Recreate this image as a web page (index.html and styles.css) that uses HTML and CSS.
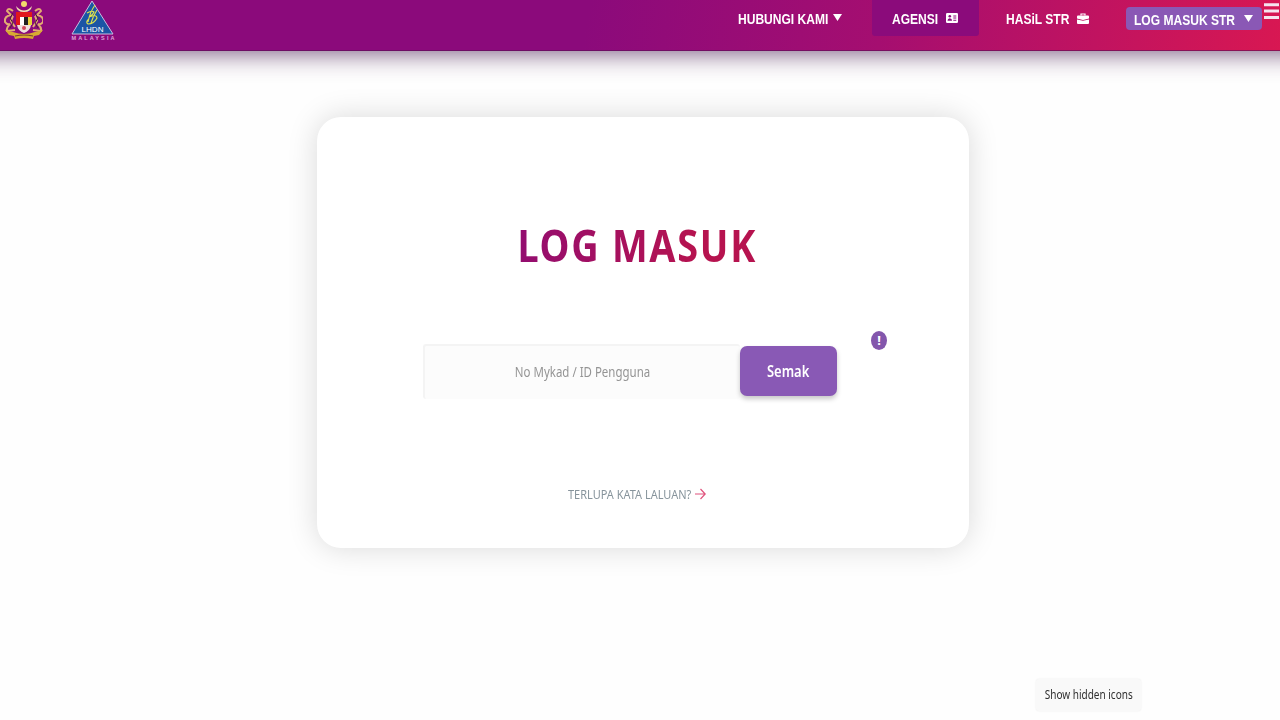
FILE: index.html
```
<!DOCTYPE html>
<html lang="ms">
<head>
<meta charset="utf-8">
<meta name="viewport" content="width=device-width, initial-scale=1.0">
<title>Log Masuk</title>
<link rel="stylesheet" href="styles.css">
</head>
<body>
<header class="header">
	<div class="logos">
		<svg class="jata" viewBox="0 0 44 40" width="44" height="40">
			<circle cx="25" cy="4" r="3" fill="#f2dc6c"/>
			<path d="M17 6q8 9 16 0q-1 6-8 6t-8-6z" fill="#f2e3b4"/>
			<path d="M18 12h14v13q-1 6-7 8q-6-2-7-8z" fill="#eee0dc"/>
			<path d="M17 12h16v5H17z" fill="#e0181c"/>
			<path d="M17 17h4v8h-4z" fill="#e0181c"/>
			<path d="M21 17h4v8h-4z" fill="#fff"/>
			<path d="M25 17h4v8h-4z" fill="#222"/>
			<path d="M29 17h4v8h-4z" fill="#ead33a"/>
			<circle cx="25" cy="28" r="2" fill="#d1495c"/>
			<path d="M14 11q-5-4-6 0l4 4q-7 1-6 7q2 3 5 2q-4 4-3 7l8-1M14 16l-2 5 4 6" fill="none" stroke="#e2ab72" stroke-width="2"/>
			<path d="M36 11q5-4 6 0l-4 4q7 1 6 7q-2 3-5 2q4 4 3 7l-8-1M36 16l2 5-4 6" fill="none" stroke="#e2ab72" stroke-width="2"/>
			<path d="M14 13l-3 5 3 5-3 5M36 13l3 5-3 5 3 5" fill="none" stroke="#4b2430" stroke-width="1"/>
			<path d="M6 30l8 2q11 4 22 0l8-2-4 5-5 1-1 3q-9-2-18 0l-1-3-5-1z" fill="#d8aa32"/>
			<path d="M16 36q9-2 18 0" fill="none" stroke="#7c392d" stroke-width="1.200"/>
		</svg>
		<svg class="lhdn" viewBox="0 0 46 42" width="46" height="42">
			<path d="M22 1L43 34H2Z" fill="#1b55a5" stroke="#c9bddf" stroke-width="1"/>
			<path d="M25 5Q20 12 18 22M17 13q5-3 7-1q-1 3-5 5M19 17q8-3 8 1q-3 6-9 6q-3-2 1-5M27 10q-4 6-6 13" fill="none" stroke="#e2e34a" stroke-width="1.100"/>
			<text x="22.5" y="32" class="lhdn-name" textLength="22" lengthAdjust="spacingAndGlyphs">LHDN</text>
			<text x="23" y="40" class="lhdn-country" textLength="43">MALAYSIA</text>
		</svg>
	</div>
	<nav class="nav">
		<a class="nav-item contact"><span class="label">HUBUNGI KAMI</span>
			<svg class="caret" width="9" height="7" viewBox="0 0 9 7"><path d="M0 0h9L4.500 7z" fill="#fff"/></svg>
		</a>
		<a class="nav-item agency"><span class="label">AGENSI</span>
			<svg width="12" height="10" viewBox="0 0 12 10"><rect width="12" height="10" rx="1.200" fill="#fff"/><circle cx="3.800" cy="3.300" r="1.300" fill="#8b0b7b"/><path d="M1.500 7.700q0-2.500 2.300-2.500t2.300 2.500zM7.300 2.500h3v1h-3zM7.300 4.600h3v1h-3zM7.300 6.700h3v1h-3z" fill="#8b0b7b"/></svg>
		</a>
		<a class="nav-item hasil"><span class="label">HASiL STR</span>
			<svg width="12" height="11" viewBox="0 0 12 11"><path d="M4 2.500V1h4v1.500" fill="none" stroke="#fff" stroke-width="1.200"/><path d="M1 2.500h10q1 0 1 1v2L6 7 0 5.500v-2q0-1 1-1zM0 6.500l6 1.300 6-1.300V10q0 1-1 1H1q-1 0-1-1z" fill="#fff"/></svg>
		</a>
		<a class="nav-item login"><span class="label">LOG MASUK STR</span>
			<svg width="9" height="7" viewBox="0 0 9 7"><path d="M0 0h9L4.500 7z" fill="#fff"/></svg>
		</a>
		<svg class="burger" width="16" height="17" viewBox="0 0 16 17"><path d="M0 1.800h15M0 8h15M0 14.500h15" stroke="#f5e4ee" stroke-width="3"/></svg>
	</nav>
</header>

<main class="card">
	<h1 class="title"><span>LOG MASUK</span></h1>
	<div class="form">
		<div class="field"><span>No Mykad / ID Pengguna</span></div>
		<button class="submit"><span>Semak</span></button>
		<div class="info"><span>!</span></div>
	</div>
	<a class="forgot"><span>TERLUPA KATA LALUAN?</span>
		<svg width="11" height="12" viewBox="0 0 11 12"><path d="M0 6h10M5.500 1l4.700 5-4.700 5" fill="none" stroke="#e0527c" stroke-width="1.200"/></svg>
	</a>
</main>

<div class="tooltip"><span>Show hidden icons</span></div>
</body>
</html>
```
FILE: styles.css
```
* {
	box-sizing: border-box;
}

body {
	margin: 0;
	height: 720px;
	overflow: hidden;
	background: #fefefe;
	font-family: "Noto Sans", "Open Sans", sans-serif;
}

.header {
	height: 51px;
	margin: 0 -30px;
	padding: 0 30px;
	display: flex;
	justify-content: space-between;
	background: linear-gradient(100deg, #8b0a7b 0%, #8b0a7b 46%, #a50e70 68%, #dc1850 100%);
	border-bottom: 1px solid rgba(90, 15, 85, .6);
	box-shadow: 0 3px 24px rgba(65, 20, 75, .68);
}

.logos {
	display: flex;
	gap: 27px;
}

.jata {
	margin-left: -1px;
}

.lhdn-name {
	font: 8px "Liberation Sans", Arial, sans-serif;
	fill: #fff;
	text-anchor: middle;
}

.lhdn-country {
	font: bold 5.5px "Liberation Sans", Arial, sans-serif;
	fill: #dfa3dc;
	text-anchor: middle;
}

.nav {
	display: flex;
	align-items: flex-start;
}

.nav-item {
	height: 36px;
	display: flex;
	align-items: center;
	gap: 5px;
	color: #fff;
	font: bold 14px "Liberation Sans", Arial, sans-serif;
}

/* condensed labels: the box is narrower than the unscaled text */
.label {
	white-space: nowrap;
	transform: scaleX(.86);
	transform-origin: left;
	padding-top: 2px;
}

.contact {
	width: 134px;
}

.contact .label {
	width: 90px;
}

.caret {
	margin-bottom: 2px;
}

.agency {
	width: 107px;
	padding-left: 20px;
	gap: 8px;
	background: #8b0b7b;
	border-radius: 0 0 3px 3px;
}

.agency .label {
	width: 46px;
}

.hasil {
	width: 147px;
	padding-left: 27px;
	gap: 7px;
}

.hasil .label {
	width: 64px;
}

.login {
	width: 136px;
	height: 23px;
	margin-top: 7px;
	padding-left: 8px;
	gap: 9px;
	background: #8a58b5;
	border-radius: 4px;
}

.login .label {
	width: 101px;
}

.burger {
	margin: 3px 0 0 2px;
}

.card {
	width: 652px;
	height: 431px;
	margin: 66px 0 0 317px;
	padding-top: 97px;
	display: flex;
	flex-direction: column;
	align-items: center;
	background: #fff;
	border-radius: 24px;
	box-shadow: 0 0 30px rgba(0, 0, 0, .15);
}

.title {
	width: 238px;
	height: 64px;
	margin: 0 12px 0 0;
	display: flex;
	justify-content: center;
	font-size: 44px;
	line-height: 62px;
	font-weight: 700;
	letter-spacing: 2px;
	white-space: nowrap;
}

.title span {
	background: linear-gradient(90deg, #930d70, #b6134f 75%);
	-webkit-background-clip: text;
	background-clip: text;
	color: transparent;
	transform: scaleX(.86);
}

.form {
	width: 464px;
	height: 68px;
	margin: 53px 0 0 24px;
	display: flex;
}

.field {
	width: 317px;
	height: 55px;
	margin-top: 13px;
	padding-bottom: 3px;
	display: flex;
	align-items: center;
	justify-content: center;
	background: #fcfcfc;
	border-top: 2px solid #f4f4f4;
	border-left: 2px solid #f4f4f4;
	border-radius: 3px;
	color: #949494;
	font-size: 14px;
}

.field span {
	white-space: nowrap;
	transform: scaleX(.82);
}

.submit {
	width: 97px;
	height: 50px;
	margin-top: 15px;
	padding: 0;
	border: 0;
	border-radius: 7px;
	background: #8959b5;
	box-shadow: 0 3px 5px rgba(0, 0, 0, .22);
	color: #fff;
	font: 600 16px "Noto Sans", "Open Sans", sans-serif;
}

.submit span {
	display: inline-block;
	transform: scaleX(.81);
}

.info {
	width: 16px;
	height: 19px;
	margin-left: 34px;
	border-radius: 50%;
	background: #8356ac;
	color: #fff;
	font-size: 13px;
	line-height: 19px;
	font-weight: 700;
	text-align: center;
}

.forgot {
	margin: 85px 13px 0 0;
	width: 138px;
	display: flex;
	align-items: center;
	gap: 3px;
	color: #87949c;
	font-size: 12px;
	line-height: 20px;
}

.forgot span {
	width: 124px;
	padding-top: 1px;
	white-space: nowrap;
	transform: scaleX(.915);
	transform-origin: left;
}

.forgot svg {
	margin-bottom: 2px;
}

.tooltip {
	width: 105px;
	height: 32px;
	margin: 131px 0 0 1036px;
	padding-bottom: 2px;
	display: flex;
	align-items: center;
	justify-content: center;
	background: #f9f9f9;
	border-radius: 3px;
	box-shadow: 0 0 2px rgba(0, 0, 0, .08);
	color: #303030;
	font-size: 12px;
}

.tooltip span {
	white-space: nowrap;
	transform: scaleX(.835);
}
```
